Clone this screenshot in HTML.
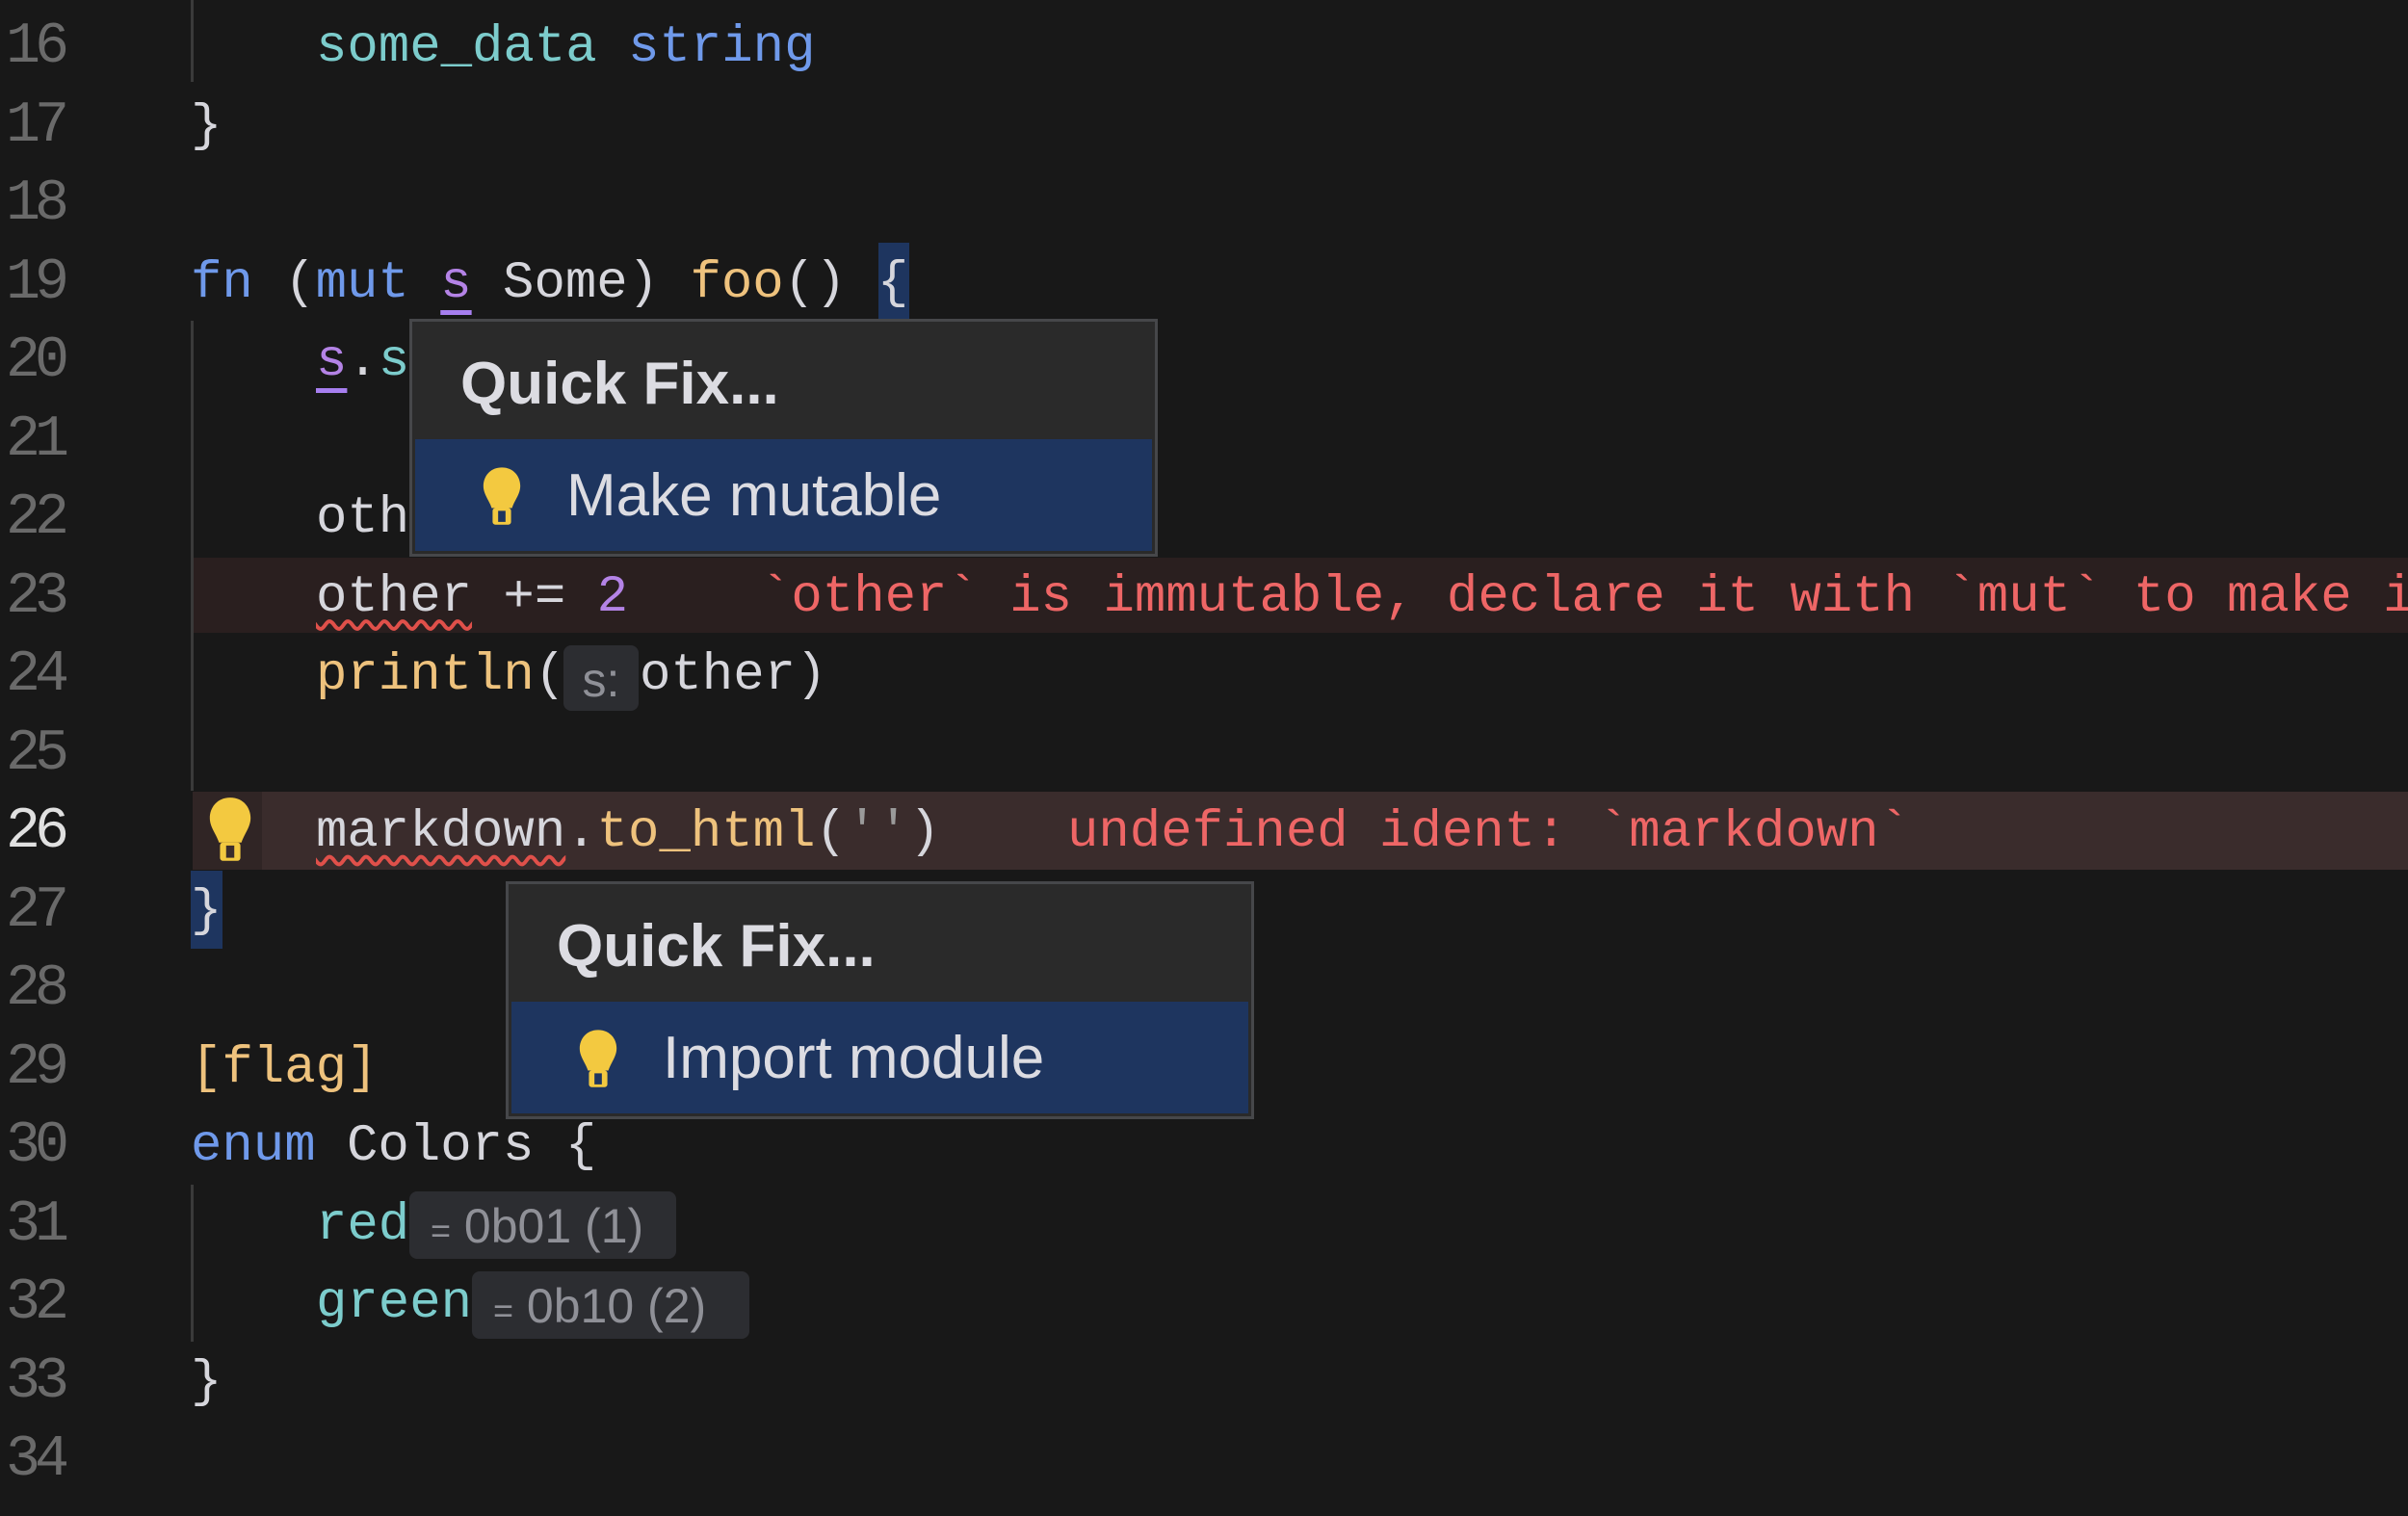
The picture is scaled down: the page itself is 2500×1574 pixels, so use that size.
<!DOCTYPE html>
<html><head><meta charset="utf-8"><style>
html,body{margin:0;padding:0;background:#181818;}
body{width:2500px;height:1574px;position:relative;overflow:hidden;font-family:"Liberation Mono","DejaVu Sans Mono",monospace;font-size:54px;color:#d6d6dc;}
#w{position:absolute;left:0;top:0;width:2500px;height:1574px;overflow:hidden;}
.ln{position:absolute;left:6px;width:120px;height:81.5px;line-height:84px;color:#6a6a6a;font-size:60px;letter-spacing:-6px;}
.ln.cur{color:#e0e0e0;}
.c{position:absolute;height:81.5px;line-height:86px;white-space:pre;}
.kw{color:#6f99ea}.fn{color:#eec27d}.cy{color:#7ccccc}.pu{color:#b483e6}.er{color:#ee6666}
.wv{text-decoration:underline wavy #e0504a;text-decoration-thickness:4px;text-underline-offset:10px;}
.ul{text-decoration:underline solid #a77ff0;text-decoration-thickness:5px;text-underline-offset:14px;}
.guide{position:absolute;left:198px;width:3px;background:#3a3a3a;}
.hint{position:absolute;background:#2c2d31;border-radius:8px;color:#8f9097;font-family:"Liberation Sans",sans-serif;font-size:50px;line-height:72px;white-space:pre;}
.pop{position:absolute;background:#2a2a2a;border:3px solid #46474a;box-sizing:border-box;font-family:"Liberation Sans",sans-serif;}
.pop .h{position:absolute;left:50px;top:20px;font-weight:bold;font-size:62px;color:#dcdce2;line-height:90px;}
.pop .sel{position:absolute;left:3px;right:3px;bottom:3px;background:#1e355f;}
.pop .sel span{position:absolute;left:157px;font-size:62px;color:#dcdce2;line-height:118px;top:0;}
.pop .sel svg{position:absolute;left:67px;top:27px;}
</style></head><body><div id="w">

<div style="position:absolute;left:200px;top:579px;width:2300px;height:78px;background:#2a1f1f"></div>
<div style="position:absolute;left:200px;top:822px;width:2300px;height:81px;background:#3a2c2c"></div>
<div style="position:absolute;left:200px;top:822px;width:72px;height:81px;background:#302525"></div>
<div style="position:absolute;left:912px;top:252px;width:32px;height:80px;background:#1e355f"></div>
<div style="position:absolute;left:198px;top:904px;width:33px;height:81px;background:#1e355f"></div>
<div class="guide" style="top:0;height:85px"></div>
<div class="guide" style="top:333px;height:488px"></div>
<div class="guide" style="top:1230px;height:163px"></div>

<div class="ln" style="top:7px">16</div>
<div class="ln" style="top:88.5px">17</div>
<div class="ln" style="top:170px">18</div>
<div class="ln" style="top:251.5px">19</div>
<div class="ln" style="top:333px">20</div>
<div class="ln" style="top:414.5px">21</div>
<div class="ln" style="top:496px">22</div>
<div class="ln" style="top:577.5px">23</div>
<div class="ln" style="top:659px">24</div>
<div class="ln" style="top:740.5px">25</div>
<div class="ln cur" style="top:822px">26</div>
<div class="ln" style="top:903.5px">27</div>
<div class="ln" style="top:985px">28</div>
<div class="ln" style="top:1066.5px">29</div>
<div class="ln" style="top:1148px">30</div>
<div class="ln" style="top:1229.5px">31</div>
<div class="ln" style="top:1311px">32</div>
<div class="ln" style="top:1392.5px">33</div>
<div class="ln" style="top:1474px">34</div>

<div class="c" style="top:7px;left:328px"><span class="cy">some_data</span> <span class="kw">string</span></div>
<div class="c" style="top:88.5px;left:198px">}</div>
<div class="c" style="top:251.5px;left:198px"><span class="kw">fn</span> (<span class="kw">mut</span> <span class="pu ul">s</span> Some) <span class="fn">foo</span>() {</div>
<div class="c" style="top:333px;left:328px"><span class="pu ul">s</span>.<span class="cy">s</span></div>
<div class="c" style="top:496px;left:328px">oth</div>
<div class="c" style="top:577.5px;left:328px"><span class="wv">other</span> += <span class="pu">2</span></div>
<div class="c er" style="top:577.5px;left:789px">`other` is immutable, declare it with `mut` to make i</div>
<div class="c" style="top:659px;left:328px"><span class="fn">println</span>(</div>
<div class="hint" style="left:585px;top:670px;width:78px;height:68px;text-align:center">s:</div>
<div class="c" style="top:659px;left:664px">other)</div>
<svg style="position:absolute;left:213px;top:826px" width="52" height="72" viewBox="0 0 48 68"><path d="M24 2C11 2 4 12 4 22c0 9 6 15 9 24h22c3-9 9-15 9-24C44 12 37 2 24 2z" fill="#f3c940"/><rect x="14" y="46" width="20" height="18" rx="3" fill="#f3c940"/><rect x="20" y="49" width="8" height="12" fill="#3a2c2c"/></svg>
<div class="c" style="top:822px;left:328px"><span class="wv">markdown</span>.<span class="fn">to_html</span>(<span style="color:#9a9a9a">''</span>)</div>
<div class="c er" style="top:822px;left:1108px">undefined ident: `markdown`</div>
<div class="c" style="top:903.5px;left:198px">}</div>
<div class="c fn" style="top:1066.5px;left:198px">[flag]</div>
<div class="c" style="top:1148px;left:198px"><span class="kw">enum</span> Colors {</div>
<div class="c cy" style="top:1229.5px;left:328px">red</div>
<div class="hint" style="left:425px;top:1237px;width:277px;height:70px;padding-left:22px;box-sizing:border-box"><span style="font-size:36px">=</span> 0b01 (1)</div>
<div class="c cy" style="top:1311px;left:328px">green</div>
<div class="hint" style="left:490px;top:1320px;width:288px;height:70px;padding-left:22px;box-sizing:border-box"><span style="font-size:36px">=</span> 0b10 (2)</div>
<div class="c" style="top:1392.5px;left:198px">}</div>

<div class="pop" style="left:425px;top:331px;width:777px;height:247px">
  <div class="h">Quick Fix...</div>
  <div class="sel" style="height:116px"><svg width="46" height="66" viewBox="0 0 48 68"><path d="M24 2C11 2 4 12 4 22c0 9 6 15 9 24h22c3-9 9-15 9-24C44 12 37 2 24 2z" fill="#f3c940"/><rect x="14" y="46" width="20" height="18" rx="3" fill="#f3c940"/><rect x="20" y="49" width="8" height="12" fill="#1e355f"/></svg><span>Make mutable</span></div>
</div>
<div class="pop" style="left:525px;top:915px;width:777px;height:247px">
  <div class="h">Quick Fix...</div>
  <div class="sel" style="height:116px"><svg width="46" height="66" viewBox="0 0 48 68"><path d="M24 2C11 2 4 12 4 22c0 9 6 15 9 24h22c3-9 9-15 9-24C44 12 37 2 24 2z" fill="#f3c940"/><rect x="14" y="46" width="20" height="18" rx="3" fill="#f3c940"/><rect x="20" y="49" width="8" height="12" fill="#1e355f"/></svg><span>Import module</span></div>
</div>
</div></body></html>
